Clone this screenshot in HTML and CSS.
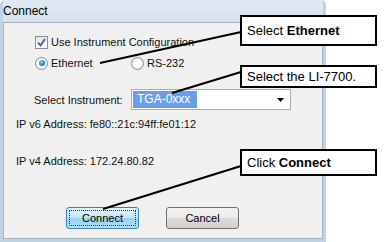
FILE: index.html
```html
<!DOCTYPE html>
<html lang="en">
<head>
  <meta charset="UTF-8">
  <title>Connect</title>
  <link rel="stylesheet" href="styles.css">
</head>
<body>
  <div class="stage">
    <!-- Dialog window -->
    <div class="window">
      <div class="titlebar">Connect</div>
      <div class="client">
        <label class="row check-row">
          <span class="checkbox">
            <svg width="9" height="9" viewBox="0 0 9 9"><path d="M1 4.5 L3.5 7.5 L8 1" fill="none" stroke="#4a5f86" stroke-width="1.8"/></svg>
          </span>
          Use Instrument Configuration
        </label>
        <div class="row radio-row">
          <label class="radio-item eth"><span class="radio on"></span>Ethernet</label>
          <label class="radio-item"><span class="radio"></span>RS-232</label>
        </div>
        <div class="row select-row">
          <span class="select-label">Select Instrument:</span>
          <div class="combo">
            <span class="combo-value">TGA-0xxx</span>
            <svg class="combo-arrow" width="7" height="4" viewBox="0 0 7 4"><path d="M0 0 H7 L3.5 4 Z" fill="#000"/></svg>
          </div>
        </div>
        <div class="row ip-row ip6">IP v6 Address: fe80::21c:94ff:fe01:12</div>
        <div class="row ip-row ip4">IP v4 Address: 172.24.80.82</div>
        <div class="row buttons">
          <button class="btn default"><span>Connect</span></button>
          <button class="btn">Cancel</button>
        </div>
      </div>
    </div>

    <!-- Annotation leaders -->
    <svg class="leaders" width="390" height="242" viewBox="0 0 390 242">
      <line x1="100" y1="63" x2="241" y2="32" />
      <line x1="172" y1="93" x2="241" y2="72" />
      <line x1="103" y1="209" x2="241" y2="166" />
    </svg>

    <div class="callout c1">Select&nbsp;<b>Ethernet</b></div>
    <div class="callout c2">Select the LI-7700.</div>
    <div class="callout c3">Click&nbsp;<b>Connect</b></div>
  </div>
</body>
</html>
```

FILE: styles.css
```css
body {
  margin: 0;
  background: #fff;
  font-family: "Liberation Sans", Arial, sans-serif;
  font-size: 11px;
  color: #111;
}
.stage {
  position: relative;
  width: 390px;
  height: 242px;
  overflow: hidden;
}
.window {
  width: 326px;
  height: 242px;
  box-sizing: border-box;
  display: flex;
  flex-direction: column;
  background: linear-gradient(#e1e9f3, #d6e1ee 22px);
  border: 3px solid #c3d2e3;
  border-top: none;
  border-radius: 5px 5px 0 0;
}
.titlebar {
  height: 22px;
  line-height: 22px;
  font-size: 12px;
  color: #000;
}
.client {
  flex: 1;
  background: #f0f0f0;
  border: 1px solid #a5b5c6;
}
.row {
  display: flex;
  align-items: center;
}
.check-row {
  margin-top: 11px;
  height: 16px;
  padding-left: 31px;
  gap: 3px;
}
.checkbox {
  width: 11px;
  height: 11px;
  border: 1px solid #8e8f8f;
  background: linear-gradient(#dfe3e8, #fdfdfd);
  display: flex;
  align-items: center;
  justify-content: center;
}
.radio-row {
  margin-top: 5px;
  height: 16px;
  padding-left: 31px;
}
.radio-item {
  display: flex;
  align-items: center;
  gap: 3px;
}
.radio-item.eth {
  width: 96px;
}
.radio {
  width: 11px;
  height: 11px;
  border: 1px solid #8e8f8f;
  border-radius: 50%;
  background: radial-gradient(circle, #fbfbfb 40%, #d7dbe0);
  display: flex;
  align-items: center;
  justify-content: center;
}
.radio.on::after {
  content: "";
  width: 6px;
  height: 6px;
  border-radius: 50%;
  background: radial-gradient(circle at 40% 35%, #7fd0ff, #1b6fa8 70%);
}
.select-row {
  margin-top: 18px;
  height: 21px;
  padding-left: 30px;
}
.select-label {
  width: 97px;
  white-space: nowrap;
}
.combo {
  width: 160px;
  height: 21px;
  box-sizing: border-box;
  border: 1px solid #abadb3;
  background: #fff;
  display: flex;
  align-items: center;
  padding: 0 6px 0 1px;
  justify-content: space-between;
}
.combo-value {
  background: #6b9de8;
  color: #fff;
  height: 17px;
  line-height: 17px;
  padding: 0 7px 0 4px;
  font-size: 12px;
}
.ip-row {
  height: 16px;
  padding-left: 12px;
}
.ip6 {
  margin-top: 6px;
}
.ip4 {
  margin-top: 21px;
}
.buttons {
  margin-top: 38px;
  padding-left: 62px;
  gap: 27px;
}
.btn {
  width: 73px;
  height: 22px;
  font-family: inherit;
  font-size: 11px;
  color: #000;
  border: 1px solid #707070;
  border-radius: 3px;
  background: linear-gradient(#f2f2f2 0%, #ebebeb 50%, #dddddd 51%, #cfcfcf 100%);
  padding: 0;
}
.btn.default {
  border-color: #3c7fb1;
  background: linear-gradient(#e5f4fc 0%, #c4e5f6 50%, #98d1ef 51%, #b3e0f9 100%);
  padding: 2px;
}
.btn.default span {
  display: flex;
  align-items: center;
  justify-content: center;
  height: 100%;
  border: 1px dotted #333;
  box-sizing: border-box;
}
.leaders {
  position: absolute;
  left: 0;
  top: 0;
}
.leaders line {
  stroke: #000;
  stroke-width: 2;
}
.callout {
  position: absolute;
  left: 240px;
  width: 137px;
  box-sizing: border-box;
  border: 2px solid #000;
  background: #fff;
  display: flex;
  align-items: center;
  padding-left: 5px;
  font-size: 13px;
  color: #000;
}
.c1 {
  top: 15px;
  height: 31px;
}
.c2 {
  top: 65px;
  height: 23px;
}
.c3 {
  top: 149px;
  height: 27px;
}
```
